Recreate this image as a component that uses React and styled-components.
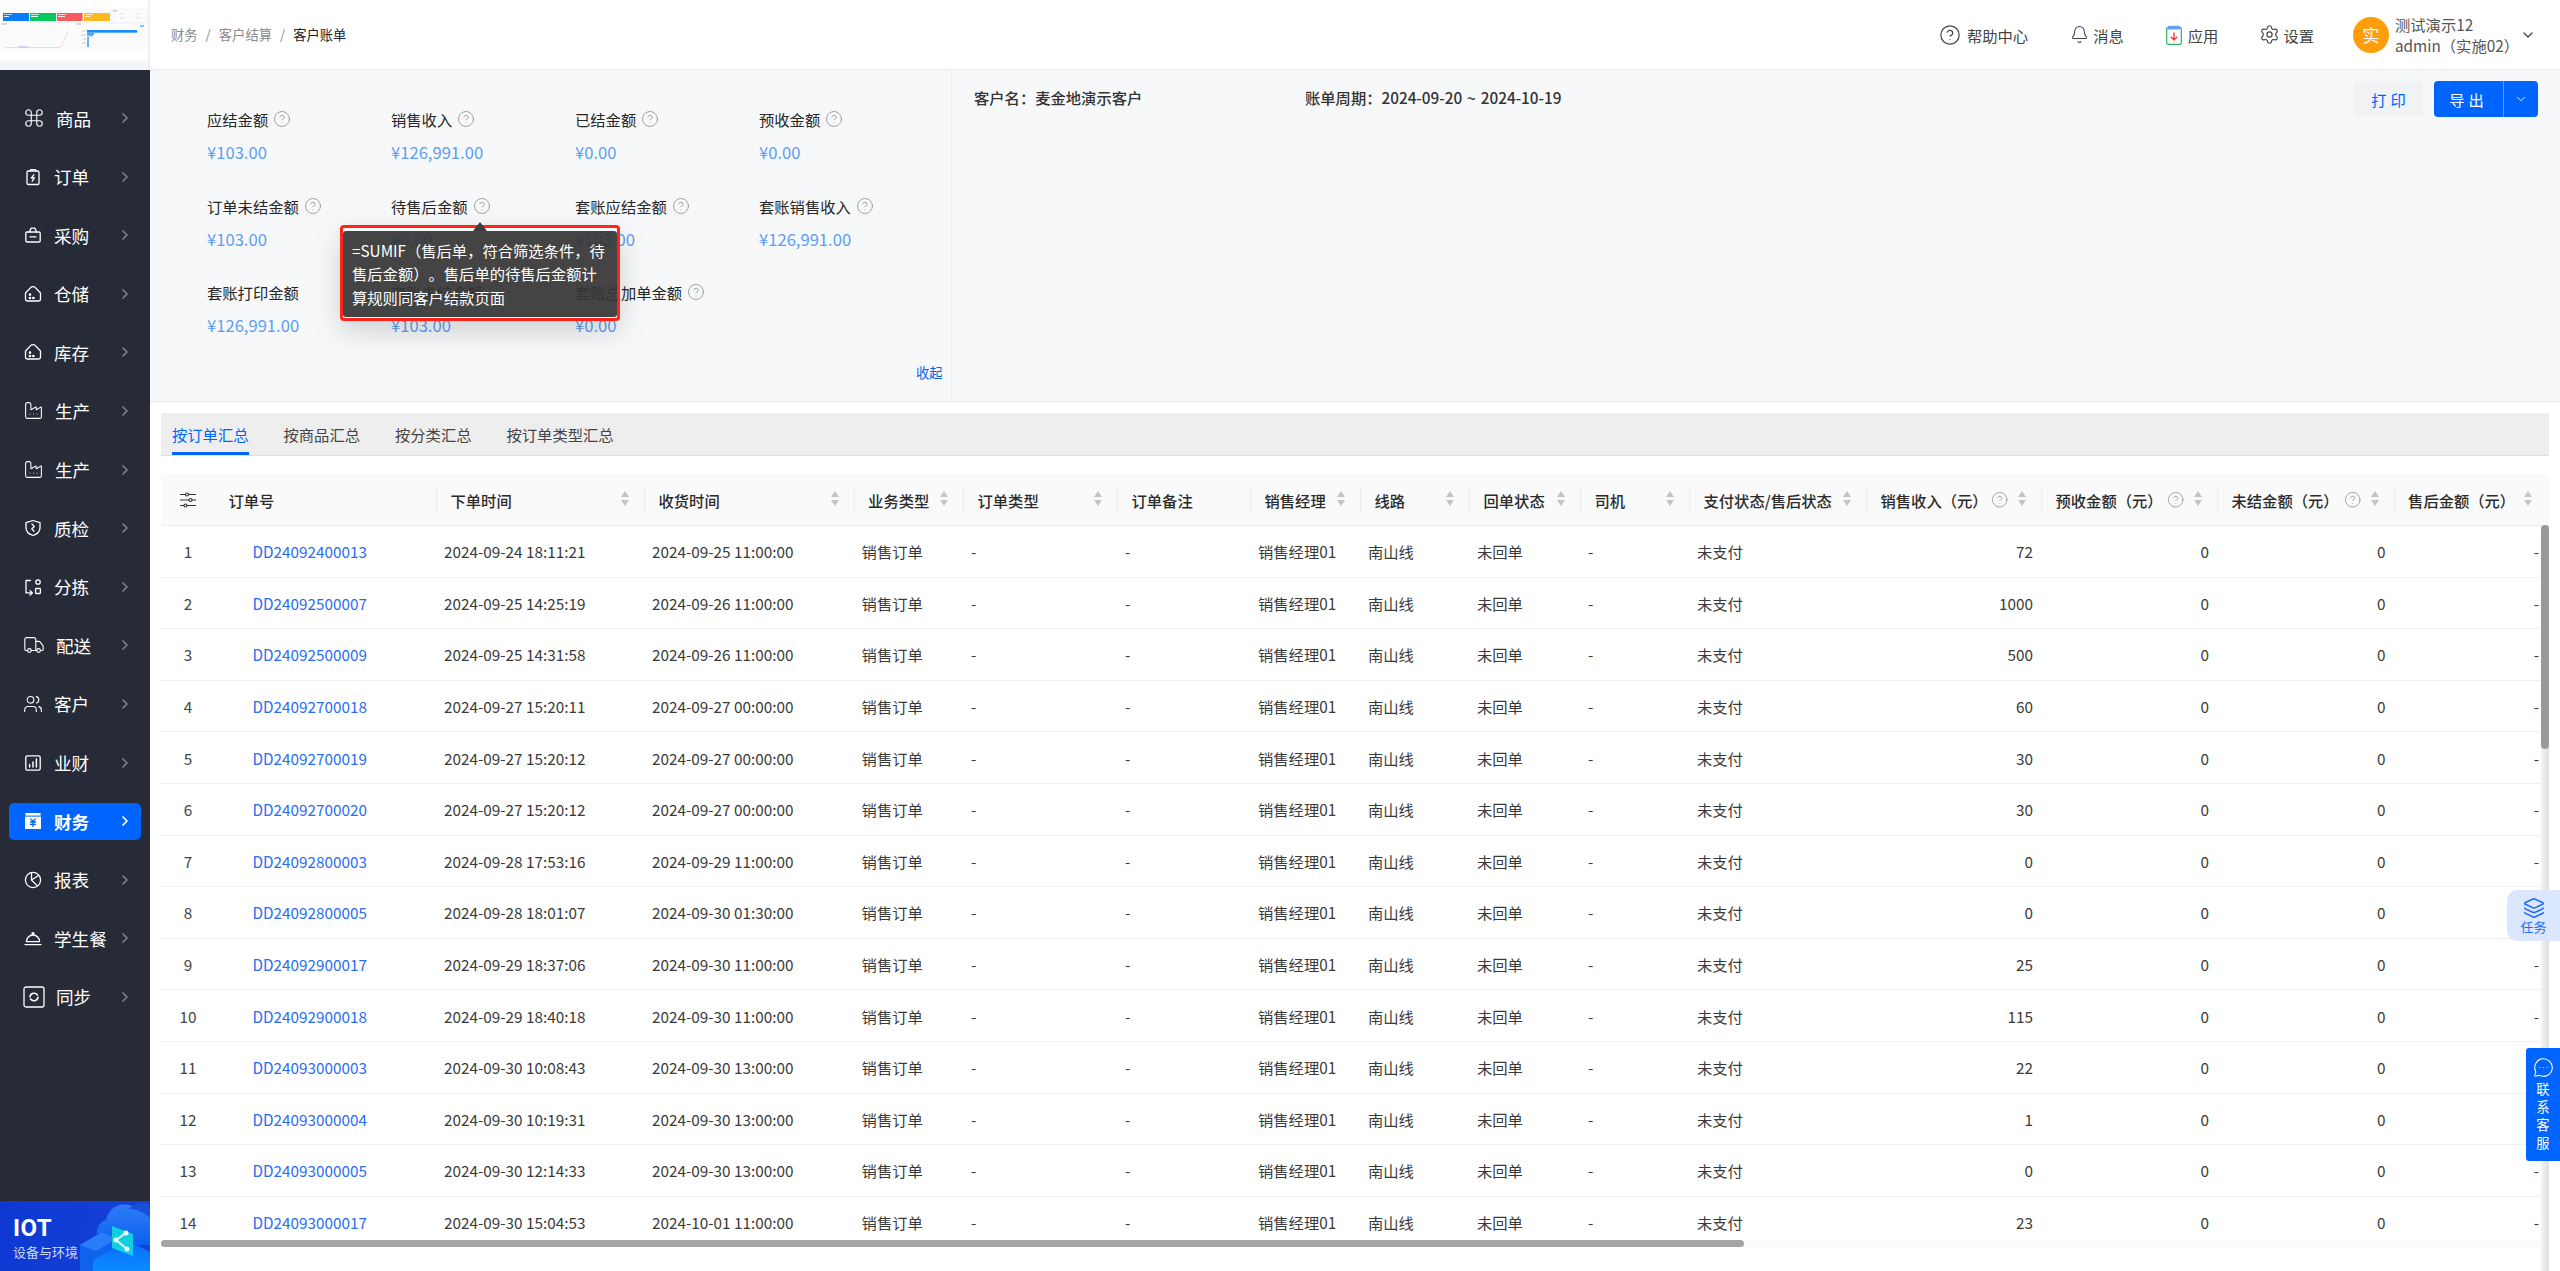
import React from 'react';
import styled, { createGlobalStyle } from 'styled-components';
import { Command, Factory, Truck, Users, CircleHelp, Bell, Settings, ChevronRight, ChevronDown, Layers, MessageCircleMore } from 'lucide-react';

const GlobalStyle = createGlobalStyle`
  html, body {
    margin: 0;
    height: 100%;
    overflow: hidden;
    background: #fff;
    font-family: "Noto Sans CJK SC", "Noto Sans", sans-serif;
    font-size: 15.3px;
    color: #333;
    text-spacing-trim: space-all;
  }
  * { box-sizing: border-box; }
`;

const Shell = styled.div`
  display: flex;
  width: 100%;
  height: 100vh;
  overflow: hidden;
`;

/* ---------- sidebar ---------- */

const Sidebar = styled.aside`
  flex: 0 0 150px;
  min-width: 0;
  display: flex;
  flex-direction: column;
  background: #272b37;
`;

const LogoBox = styled.div`
  flex: 0 0 70px;
  background: #fff;
  border-right: 2px solid #eef0f5;
  svg { display: block; }
`;

const Menu = styled.nav`
  flex: 1;
  display: flex;
  flex-direction: column;
  gap: 21.6px;
  padding: 29.5px 9px 0;
`;

const MenuItem = styled.div`
  display: flex;
  align-items: center;
  height: 37px;
  padding: 0 8px 0 14px;
  border-radius: 5px;
  color: #fff;
  font-size: 17.6px;
  font-weight: ${p => (p.$active ? 700 : 400)};
  background: ${p => (p.$active ? '#0064ff' : 'transparent')};
`;

const MenuIcon = styled.span`
  flex: 0 0 20px;
  margin-right: 11px;
  display: flex;
  align-items: center;
  justify-content: center;
  svg { display: block; flex: none; }
`;

const MenuLabel = styled.span`
  flex: 1;
  white-space: nowrap;
`;

const MenuArrow = styled(ChevronRight)`
  color: ${p => (p.$active ? '#fff' : '#7d808a')};
`;

const SideFooter = styled.div`
  flex: 0 0 70px;
  display: flex;
  justify-content: space-between;
  overflow: hidden;
  background: linear-gradient(100deg, #0e38d2 0%, #1542d8 100%);
  svg { flex: none; display: block; }
`;

const FooterText = styled.div`
  flex: 0 0 72px;
  position: relative;
  z-index: 1;
  padding: 13px 0 0 13px;
  white-space: nowrap;
  color: #fff;
`;

const FooterTitle = styled.div`
  font-family: "Roboto", sans-serif;
  font-size: 24px;
  font-weight: 700;
  line-height: 28px;
  letter-spacing: 0.5px;
`;

const FooterSub = styled.div`
  font-size: 13px;
  line-height: 20px;
  color: #cdd8fb;
`;

/* ---------- main ---------- */

const Main = styled.main`
  flex: 1;
  min-width: 0;
  display: flex;
  flex-direction: column;
  position: relative;
  overflow: hidden;
`;

const TopBar = styled.header`
  flex: 0 0 70px;
  display: flex;
  align-items: center;
  justify-content: space-between;
  padding: 0 24.5px 0 21px;
  border-bottom: 1px solid #ebecef;
  background: #fff;
`;

const Crumbs = styled.div`
  display: flex;
  align-items: center;
  gap: 8px;
  font-size: 13.3px;
  color: #8c8c8c;
`;

const CrumbNow = styled.span`
  color: #222;
`;

const TopActions = styled.div`
  display: flex;
  align-items: center;
`;

const TopAction = styled.div`
  display: flex;
  align-items: center;
  gap: ${p => p.$gap}px;
  margin-right: ${p => p.$mr}px;
  color: #444;
`;

const Avatar = styled.div`
  width: 36px;
  height: 36px;
  margin-right: 6px;
  border-radius: 50%;
  background: #ff9d0a;
  color: #fff;
  display: flex;
  align-items: center;
  justify-content: center;
  font-size: 17px;
`;

const UserName = styled.div`
  width: 124.5px;
  line-height: 21px;
  color: #555;
  white-space: nowrap;
`;

const Summary = styled.section`
  flex: 0 0 332px;
  display: flex;
  background: #f7f8fa;
  border-bottom: 1px solid #e9e9ee;
`;

const SummaryLeft = styled.div`
  flex: 0 0 802px;
  position: relative;
  padding: 38px 0 0 57px;
  border-right: 1px solid #eeeff2;
`;

const MetricGrid = styled.div`
  display: grid;
  grid-template-columns: repeat(4, 184px);
  grid-auto-rows: 86.5px;
`;

const Metric = styled.div`
  position: relative;
`;

const MetricLabel = styled.div`
  display: flex;
  align-items: center;
  gap: 5px;
  height: 22px;
  color: #262626;
  white-space: nowrap;
`;

const MetricValue = styled.div`
  margin-top: 11px;
  height: 22px;
  line-height: 22px;
  font-size: 16.6px;
  color: #5b9ef4;
  white-space: nowrap;
`;

const HelpIcon = styled(CircleHelp)`
  flex: none;
  color: #999;
`;

const Collapse = styled.a`
  position: absolute;
  right: 8.5px;
  bottom: 19.5px;
  font-size: 13.3px;
  color: #0064ff;
`;

const TipFrame = styled.div`
  position: absolute;
  z-index: 5;
  left: -51px;
  top: 30px;
  width: 280px;
  height: 96px;
  padding: 3px 0 1px;
  border: 3px solid #ff2419;
  border-radius: 4px;
  box-shadow: 0 10px 28px rgba(0, 0, 0, 0.16);
`;

const TipBody = styled.div`
  height: 100%;
  padding: 8px 5px 0 9px;
  border-radius: 3px;
  background: rgba(52, 52, 52, 0.92);
  color: #fff;
  line-height: 23.5px;
`;

const TipArrow = styled.i`
  position: absolute;
  left: 130px;
  top: -6px;
  border: 7px solid transparent;
  border-top: 0;
  border-bottom: 9px solid #3d3d3d;
`;

const SummaryRight = styled.div`
  flex: 1;
  display: flex;
  justify-content: space-between;
  padding: 11px 22px 0 22px;
`;

const Info = styled.div`
  display: flex;
  padding-top: 5px;
  font-weight: 500;
  color: #333;
  line-height: 22px;
`;

const InfoItem = styled.div`
  width: ${p => p.$w}px;
  white-space: pre;
  word-spacing: 1.5px;
`;

const Buttons = styled.div`
  display: flex;
  gap: 11px;
  height: 36px;
`;

const PrintButton = styled.button`
  width: 69px;
  border: 0;
  border-radius: 4px;
  background: #f1f2f4;
  color: #0064ff;
  font: inherit;
  letter-spacing: 4px;
  padding: 0 0 0 4px;
`;

const ExportButton = styled.div`
  width: 104px;
  display: flex;
  border-radius: 4px;
  background: #0064ff;
  color: #fff;
  letter-spacing: 4px;
`;

const ExportText = styled.span`
  flex: 0 0 70px;
  display: flex;
  align-items: center;
  justify-content: center;
  border-right: 1px solid #5c9bff;
`;

const ExportCaret = styled.span`
  flex: 1;
  display: flex;
  align-items: center;
  justify-content: center;
`;

/* ---------- tabs + table ---------- */

const Content = styled.section`
  flex: 1;
  min-height: 0;
  padding: 11px 11px 24px;
  display: flex;
  flex-direction: column;
`;

const TabBar = styled.div`
  flex: 0 0 42px;
  display: flex;
  gap: 35px;
  padding-left: 11px;
  background: #eeeeee;
  border-bottom: 1px solid #dedede;
`;

const Tab = styled.div`
  height: 42px;
  line-height: 42px;
  color: ${p => (p.$active ? '#0064ff' : '#444')};
  border-bottom: 3px solid ${p => (p.$active ? '#0064ff' : 'transparent')};
  white-space: nowrap;
`;

const columns = [
  { key: 'index', title: '', width: 54 },
  { key: 'no', title: '订单号', width: 221 },
  { key: 'created', title: '下单时间', width: 208, sort: true },
  { key: 'received', title: '收货时间', width: 209.6, sort: true },
  { key: 'biz', title: '业务类型', width: 109.4, sort: true },
  { key: 'kind', title: '订单类型', width: 154, sort: true },
  { key: 'remark', title: '订单备注', width: 133 },
  { key: 'manager', title: '销售经理', width: 110, sort: true },
  { key: 'line', title: '线路', width: 109, sort: true },
  { key: 'back', title: '回单状态', width: 111, sort: true },
  { key: 'driver', title: '司机', width: 109, sort: true },
  { key: 'pay', title: '支付状态/售后状态', width: 177, sort: true },
  { key: 'income', title: '销售收入（元）', width: 175, sort: true, help: true, right: true },
  { key: 'prepay', title: '预收金额（元）', width: 176, sort: true, help: true, right: true },
  { key: 'unpaid', title: '未结金额（元）', width: 176.6, sort: true, help: true, right: true },
  { key: 'after', title: '售后金额（元）', width: 153.4, sort: true, right: true },
];

const gridColumns = columns.map(c => `${c.width}px`).join(' ');

const TableWrap = styled.div`
  flex: 1;
  min-height: 0;
  margin-top: 18px;
  position: relative;
  overflow: hidden;
`;

const HeadRow = styled.div`
  display: grid;
  grid-template-columns: ${gridColumns};
  height: 52px;
  align-items: center;
  background: #fafafa;
  border-bottom: 1px solid #eeeeee;
  border-radius: 4px 4px 0 0;
  font-weight: 500;
  color: #2b2b2b;
`;

const HeadCell = styled.div`
  position: relative;
  display: flex;
  align-items: center;
  height: 24px;
  padding-left: ${p => p.$pad}px;
  white-space: nowrap;
  border-left: ${p => (p.$line ? '1px solid #ececec' : '0')};
`;

const HeadHelp = styled(HelpIcon)`
  position: absolute;
  right: 32px;
  top: 3px;
`;

const SortMark = styled.span`
  position: absolute;
  right: 15px;
  top: 3px;
  display: flex;
  flex-direction: column;
  gap: 3px;
  &::before, &::after {
    content: '';
    border-left: 4px solid transparent;
    border-right: 4px solid transparent;
  }
  &::before { border-bottom: 6px solid #c4c4c4; }
  &::after { border-top: 6px solid #c4c4c4; }
`;

const BodyRow = styled.div`
  display: grid;
  grid-template-columns: ${gridColumns};
  height: 51.6px;
  align-items: center;
  border-bottom: 1px solid #f0f0f0;
`;

const Cell = styled.div`
  padding: 0 8px;
  white-space: nowrap;
  text-align: ${p => (p.$right ? 'right' : 'left')};
  color: #3a3a3a;
`;

const IndexCell = styled.div`
  text-align: center;
  color: #444;
`;

const OrderLink = styled.a`
  padding-left: 29.5px;
  color: #2a6df4;
`;

const HScrollThumb = styled.div`
  position: absolute;
  left: 0;
  bottom: 0;
  width: 1583px;
  height: 7px;
  border-radius: 4px;
  background: #a5a5a5;
  z-index: 2;
`;

const HTrack = styled.div`
  position: absolute;
  left: 0;
  right: 0;
  bottom: 0;
  height: 7px;
  background: #fafafa;
`;

const VScrollTrack = styled.div`
  position: absolute;
  top: 525px;
  bottom: 0;
  right: 11px;
  width: 8px;
  background: linear-gradient(90deg, #f4f4f4, #dfdfdf);
  z-index: 2;
`;

const VScrollThumb = styled.div`
  width: 8px;
  height: 224px;
  border-radius: 4px;
  background: #999;
`;

const TaskFloat = styled.div`
  position: absolute;
  z-index: 6;
  right: 0;
  top: 890px;
  width: 53px;
  height: 51px;
  display: flex;
  flex-direction: column;
  align-items: center;
  justify-content: center;
  border-radius: 10px 0 0 10px;
  background: #dbe7ff;
  color: #1f6bff;
  font-size: 13px;
  line-height: 16px;
`;

const ServiceFloat = styled.div`
  position: absolute;
  z-index: 6;
  right: 0;
  top: 1048px;
  width: 34px;
  height: 113px;
  padding-top: 9px;
  display: flex;
  flex-direction: column;
  align-items: center;
  border-radius: 3px 0 0 3px;
  background: #0064ff;
  color: #fff;
  font-size: 13.3px;
  line-height: 18px;
`;

const ServiceText = styled.div`
  width: 14px;
  margin-top: 2px;
  text-align: center;
`;

/* ---------- drawings ---------- */

const iconProps = { width: 18, height: 18, viewBox: '0 0 18 18', fill: 'none', stroke: 'currentColor', strokeWidth: 1.3, strokeLinecap: 'round', strokeLinejoin: 'round' };

const OrderIcon = () => (
  <svg {...iconProps}>
    <rect x="3" y="3" width="12" height="13.5" rx="1.2" />
    <path d="M6.5 3V1.6h5V3" />
    <path d="M9.8 6.8 7.4 10h3L8.2 13.2" />
  </svg>
);
const BasketIcon = () => (
  <svg {...iconProps}>
    <rect x="1.8" y="6" width="14.4" height="10" rx="1.2" />
    <path d="M5.5 6 7 2.2h4L12.5 6M6 10.8h6" />
  </svg>
);
const HouseIcon = () => (
  <svg {...iconProps}>
    <path d="M1.5 8 6.6 2.6a3.3 3.3 0 0 1 4.8 0L16.5 8v6.3a1.7 1.7 0 0 1-1.7 1.7H3.2a1.7 1.7 0 0 1-1.7-1.7Z" />
    <circle cx="6" cy="9.6" r=".7" fill="currentColor" />
    <circle cx="6" cy="13" r=".7" fill="currentColor" />
    <circle cx="9.4" cy="13" r=".7" fill="currentColor" />
  </svg>
);
const ShieldIcon = () => (
  <svg {...iconProps}>
    <path d="M9 1.5 16 3.6v5.2c0 3.8-3 6.4-7 7.7-4-1.3-7-3.9-7-7.7V3.6Z" />
    <path d="M8 5l2.4 2.6L7.8 9.8l2.2 2.4" />
  </svg>
);
const SortingIcon = () => (
  <svg {...iconProps}>
    <path d="M6.5 2.5H2v12.4h6M6 12.6 8.4 15 6 17" />
    <circle cx="14" cy="4" r="2.2" />
    <rect x="11.6" y="10.5" width="4.8" height="5" rx=".8" />
  </svg>
);
const ChartIcon = () => (
  <svg {...iconProps}>
    <rect x="1.8" y="1.8" width="14.4" height="14.4" rx="1.6" />
    <path d="M5.6 13v-2.4M9 13V8M12.4 13V5" strokeWidth="1.5" />
  </svg>
);
const FinanceIcon = () => (
  <svg width="18" height="18" viewBox="0 0 18 18">
    <rect x="1.4" y="1" width="15.2" height="2.6" fill="#fff" />
    <rect x="1" y="4.6" width="16" height="12.4" fill="#fff" />
    <path d="M6.4 6.6 9 9.4l2.6-2.8M6 10h6M6 12.4h6M9 9.4V15" stroke="#0064ff" strokeWidth="1.3" fill="none" />
  </svg>
);
const PieIcon = () => (
  <svg {...iconProps}>
    <circle cx="9" cy="9" r="7.6" />
    <path d="M7.5 1.6V9l5.6 5.6M7.5 9 14.5 4.5" />
  </svg>
);
const ClocheIcon = () => (
  <svg {...iconProps}>
    <path d="M2.4 12.6a6.6 6.6 0 0 1 13.2 0Z" />
    <path d="M1 15.6h16" />
    <circle cx="9" cy="4.6" r="1" fill="currentColor" />
  </svg>
);
const SyncIcon = () => (
  <svg width="22" height="22" viewBox="0 0 22 22" fill="none" stroke="currentColor" strokeWidth="1.3" strokeLinecap="round">
    <rect x="1" y="1" width="20" height="20" rx="2" />
    <path d="M7 10.6A4.1 4.1 0 0 1 14.4 9M15 11.4A4.1 4.1 0 0 1 7.6 13" strokeWidth="1.6" />
  </svg>
);
const FilterIcon = () => (
  <svg width="16" height="16" viewBox="0 0 16 16" fill="none" stroke="#333" strokeWidth="1.2">
    <path d="M0 2.5h5.5M8.5 2.5H16M0 8h9M12 8h4M0 13.5h4M7 13.5h9" />
    <circle cx="7" cy="2.5" r="1.5" />
    <circle cx="10.5" cy="8" r="1.5" />
    <circle cx="5.5" cy="13.5" r="1.5" />
  </svg>
);
const AppIcon = () => (
  <svg width="16" height="20" viewBox="0 0 16 20" fill="none">
    <rect x=".7" y="2.5" width="14.6" height="16.8" rx="1.6" stroke="#25b163" strokeWidth="1.2" />
    <path d="M1.5 4.4V2.6A1.8 1.8 0 0 1 3.3 .8h9.4a1.8 1.8 0 0 1 1.8 1.8v1.8Z" fill="#6f9cf0" />
    <path d="M8 7.5V15M4.8 11.8 8 15l3.2-3.2" stroke="#f03c3c" strokeWidth="1.4" />
  </svg>
);

const Thumbnail = () => (
  <svg width="148" height="70" viewBox="0 0 148 70">
    <rect width="148" height="70" fill="#fff" />
    <rect y="60.5" width="148" height="9.5" fill="#f4f5f9" />
    <rect y="9" width="148" height="42" fill="#fbfbfc" />
    <rect x="3" y="13" width="26" height="8" fill="#0b7cff" />
    <rect x="30" y="13" width="26" height="8" fill="#05c95d" />
    <rect x="57" y="13" width="25.5" height="8" fill="#fb5a5c" />
    <rect x="84" y="13" width="26" height="8" fill="#ffb81f" />
    <rect x="4" y="14" width="8" height="1" fill="#a8cfff" />
    <rect x="31" y="14" width="8" height="1" fill="#b6f0cf" />
    <rect x="58" y="14" width="8" height="1" fill="#ffc9c9" />
    <rect x="85" y="14" width="8" height="1" fill="#ffe7ae" />
    <rect x="4" y="16" width="5" height="1" fill="#e2efff" />
    <rect x="31" y="16" width="7" height="1" fill="#e2fff0" />
    <rect x="58" y="16" width="7" height="1" fill="#ffe9e9" />
    <rect x="85" y="16" width="5" height="1" fill="#fff6dd" />
    <rect x="113" y="10" width="4" height="1.5" fill="#ccc" />
    <path d="M120 14h3M120 18h3M137 14h3M137 18h3" stroke="#ddd" />
    <path d="M112 9h35v14h-35ZM2 23h144" stroke="#f0f0f0" strokeWidth=".6" fill="none" />
    <rect x="2" y="23.5" width="5" height="1" fill="#bbb" />
    <rect x="76" y="23.5" width="5" height="1" fill="#bbb" />
    <path d="M5 47.5H60L64 41 68 31" stroke="#f3caca" strokeWidth=".8" fill="none" />
    <path d="M18 46.8H28" stroke="#b9a6d8" strokeWidth=".8" />
    <rect x="87" y="30" width="50" height="2.7" fill="#1a8cff" />
    <rect x="87" y="33" width="7" height="2" fill="#4aa3ff" />
    <rect x="87" y="35" width="6" height="1.5" fill="#7dbdff" />
    <rect x="87" y="37" width="2" height="10" fill="#68b1ff" />
    <path d="M82 31h4M81 35h5M83 39h3M82 43h4" stroke="#ccc" />
    <rect x="140" y="25.5" width="4" height="1" fill="#1a8cff" />
  </svg>
);

const FooterArt = () => (
  <svg width="78" height="70" viewBox="0 0 78 70">
    <defs>
      <linearGradient id="cloudFill" x1="0" y1="0" x2="0" y2="1">
        <stop offset="0" stopColor="#2f7bf4" />
        <stop offset="1" stopColor="#0a62f2" />
      </linearGradient>
      <linearGradient id="blockFill" x1="0" y1="0" x2="0" y2="1">
        <stop offset="0" stopColor="#0b6cff" />
        <stop offset="1" stopColor="#0a8bff" />
      </linearGradient>
    </defs>
    <path d="M28 44a13 13 0 0 1 0-25 19 19 0 0 1 34-8 12 12 0 0 1 16 9v24Z" fill="url(#cloudFill)" />
    <path d="M51 8a15 15 0 0 1 27 8v10C72 14 62 8 51 8Z" fill="#1a50d8" />
    <path d="M2 44 24 31l14 7v32H2Z" fill="#0f62ee" />
    <path d="M2 44 24 31l14 7-20 12Z" fill="#2a7cf8" />
    <path d="M15 59 50 40l28 14v16H15Z" fill="url(#blockFill)" />
    <path d="M34 25 55 33v22L34 47Z" fill="#12cfe0" />
    <path d="M38 39 48 32M38 39 49 48" stroke="#dff" strokeWidth="1.8" />
    <circle cx="38" cy="39" r="2.5" fill="#e6fbff" />
    <circle cx="48" cy="32" r="2.5" fill="#e6fbff" />
    <circle cx="49" cy="48" r="2.5" fill="#e6fbff" />
  </svg>
);

/* ---------- data ---------- */

const menu = [
  { label: '商品', icon: <Command size={22} strokeWidth={1.2} /> },
  { label: '订单', icon: <OrderIcon /> },
  { label: '采购', icon: <BasketIcon /> },
  { label: '仓储', icon: <HouseIcon /> },
  { label: '库存', icon: <HouseIcon /> },
  { label: '生产', icon: <Factory size={21} strokeWidth={1.2} /> },
  { label: '生产', icon: <Factory size={21} strokeWidth={1.2} /> },
  { label: '质检', icon: <ShieldIcon /> },
  { label: '分拣', icon: <SortingIcon /> },
  { label: '配送', icon: <Truck size={22} strokeWidth={1.2} /> },
  { label: '客户', icon: <Users size={20} strokeWidth={1.3} /> },
  { label: '业财', icon: <ChartIcon /> },
  { label: '财务', icon: <FinanceIcon />, active: true },
  { label: '报表', icon: <PieIcon /> },
  { label: '学生餐', icon: <ClocheIcon /> },
  { label: '同步', icon: <SyncIcon /> },
];

const metrics = [
  { label: '应结金额', value: '¥103.00', help: true },
  { label: '销售收入', value: '¥126,991.00', help: true },
  { label: '已结金额', value: '¥0.00', help: true },
  { label: '预收金额', value: '¥0.00', help: true },
  { label: '订单未结金额', value: '¥103.00', help: true },
  { label: '待售后金额', value: '¥0.00', help: true, tip: true },
  { label: '套账应结金额', value: '¥103.00', help: true },
  { label: '套账销售收入', value: '¥126,991.00', help: true },
  { label: '套账打印金额', value: '¥126,991.00' },
  { label: '套账未结金额', value: '¥103.00', help: true },
  { label: '套账总加单金额', value: '¥0.00', help: true },
];

const orders = [
  ['DD24092400013', '2024-09-24 18:11:21', '2024-09-25 11:00:00', 72],
  ['DD24092500007', '2024-09-25 14:25:19', '2024-09-26 11:00:00', 1000],
  ['DD24092500009', '2024-09-25 14:31:58', '2024-09-26 11:00:00', 500],
  ['DD24092700018', '2024-09-27 15:20:11', '2024-09-27 00:00:00', 60],
  ['DD24092700019', '2024-09-27 15:20:12', '2024-09-27 00:00:00', 30],
  ['DD24092700020', '2024-09-27 15:20:12', '2024-09-27 00:00:00', 30],
  ['DD24092800003', '2024-09-28 17:53:16', '2024-09-29 11:00:00', 0],
  ['DD24092800005', '2024-09-28 18:01:07', '2024-09-30 01:30:00', 0],
  ['DD24092900017', '2024-09-29 18:37:06', '2024-09-30 11:00:00', 25],
  ['DD24092900018', '2024-09-29 18:40:18', '2024-09-30 11:00:00', 115],
  ['DD24093000003', '2024-09-30 10:08:43', '2024-09-30 13:00:00', 22],
  ['DD24093000004', '2024-09-30 10:19:31', '2024-09-30 13:00:00', 1],
  ['DD24093000005', '2024-09-30 12:14:33', '2024-09-30 13:00:00', 0],
  ['DD24093000017', '2024-09-30 15:04:53', '2024-10-01 11:00:00', 23],
];

const tabs = ['按订单汇总', '按商品汇总', '按分类汇总', '按订单类型汇总'];

const App = () => (
  <Shell>
    <GlobalStyle />
    <Sidebar>
      <LogoBox><Thumbnail /></LogoBox>
      <Menu>
        {menu.map((m, i) => (
          <MenuItem key={i} $active={m.active}>
            <MenuIcon>{m.icon}</MenuIcon>
            <MenuLabel>{m.label}</MenuLabel>
            <MenuArrow size={16} strokeWidth={2.6} $active={m.active} />
          </MenuItem>
        ))}
      </Menu>
      <SideFooter>
        <FooterText>
          <FooterTitle>IOT</FooterTitle>
          <FooterSub>设备与环境</FooterSub>
        </FooterText>
        <FooterArt />
      </SideFooter>
    </Sidebar>

    <Main>
      <TopBar>
        <Crumbs>
          <span>财务</span><span>/</span><span>客户结算</span><span>/</span><CrumbNow>客户账单</CrumbNow>
        </Crumbs>
        <TopActions>
          <TopAction $mr={41.5} $gap={6}><CircleHelp size={22} strokeWidth={1.3} />帮助中心</TopAction>
          <TopAction $mr={42} $gap={4.5}><Bell size={19} strokeWidth={1.3} />消息</TopAction>
          <TopAction $mr={40.5} $gap={6}><AppIcon />应用</TopAction>
          <TopAction $mr={39} $gap={3.5}><Settings size={21} strokeWidth={1.3} />设置</TopAction>
          <Avatar>实</Avatar>
          <UserName>测试演示12<br />admin（实施02）</UserName>
          <ChevronDown size={16} strokeWidth={2} color="#444" />
        </TopActions>
      </TopBar>

      <Summary>
        <SummaryLeft>
          <MetricGrid>
            {metrics.map(m => (
              <Metric key={m.label}>
                <MetricLabel>{m.label}{m.help && <HelpIcon size={18} strokeWidth={1.2} />}</MetricLabel>
                <MetricValue>{m.value}</MetricValue>
                {m.tip && (
                  <TipFrame>
                    <TipArrow />
                    <TipBody>=SUMIF（售后单，符合筛选条件，待售后金额）。售后单的待售后金额计算规则同客户结款页面</TipBody>
                  </TipFrame>
                )}
              </Metric>
            ))}
          </MetricGrid>
          <Collapse>收起</Collapse>
        </SummaryLeft>
        <SummaryRight>
          <Info>
            <InfoItem $w={331}>客户名：麦金地演示客户</InfoItem>
            <InfoItem $w={400}>账单周期：2024-09-20 ~ 2024-10-19</InfoItem>
          </Info>
          <Buttons>
            <PrintButton>打印</PrintButton>
            <ExportButton>
              <ExportText>导出</ExportText>
              <ExportCaret><ChevronDown size={14} strokeWidth={1.5} /></ExportCaret>
            </ExportButton>
          </Buttons>
        </SummaryRight>
      </Summary>

      <Content>
        <TabBar>
          {tabs.map((t, i) => <Tab key={t} $active={i === 0}>{t}</Tab>)}
        </TabBar>
        <TableWrap>
          <HeadRow>
            {columns.map((c, i) => (
              <HeadCell key={c.key} $line={i > 1} $pad={c.key === 'index' ? 19 : 13.5}>
                {c.key === 'index' ? <FilterIcon /> : c.title}
                {c.help && <HeadHelp size={17.5} strokeWidth={1.2} />}
                {c.sort && <SortMark />}
              </HeadCell>
            ))}
          </HeadRow>
          {orders.map((o, i) => (
            <BodyRow key={o[0]}>
              <IndexCell>{i + 1}</IndexCell>
              <Cell><OrderLink>{o[0]}</OrderLink></Cell>
              <Cell>{o[1]}</Cell>
              <Cell>{o[2]}</Cell>
              <Cell>销售订单</Cell>
              <Cell>-</Cell>
              <Cell>-</Cell>
              <Cell>销售经理01</Cell>
              <Cell>南山线</Cell>
              <Cell>未回单</Cell>
              <Cell>-</Cell>
              <Cell>未支付</Cell>
              <Cell $right>{o[3]}</Cell>
              <Cell $right>0</Cell>
              <Cell $right>0</Cell>
              <Cell $right>-</Cell>
            </BodyRow>
          ))}
          <HTrack />
          <HScrollThumb />
        </TableWrap>
      </Content>
    </Main>

    <VScrollTrack><VScrollThumb /></VScrollTrack>
    <TaskFloat><Layers size={22} strokeWidth={1.7} />任务</TaskFloat>
    <ServiceFloat>
      <MessageCircleMore size={21} strokeWidth={1.2} />
      <ServiceText>联系客服</ServiceText>
    </ServiceFloat>
  </Shell>
);

export default App;
